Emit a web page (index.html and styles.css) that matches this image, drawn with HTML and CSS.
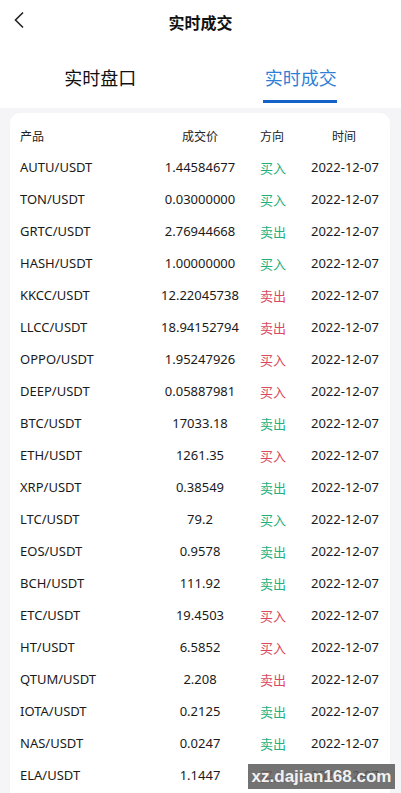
FILE: index.html
```html
<!DOCTYPE html>
<html lang="zh-CN">
<head>
    <meta charset="UTF-8">
    <meta name="viewport" content="width=device-width, initial-scale=1.0">
    <title>实时成交</title>
    <link rel="stylesheet" href="styles.css">
</head>
<body>

    <!-- 顶部导航 -->
    <header class="topbar">
        <a class="back" href="#">
            <svg width="12" height="18" viewBox="0 0 12 18"><path d="M10 1.5 L2.5 9 L10 16.5" fill="none" stroke="#222" stroke-width="1.6"/></svg>
        </a>
        <h1>实时成交</h1>
    </header>

    <!-- 标签 -->
    <nav class="tabs">
        <div class="tab">实时盘口</div>
        <div class="tab active">实时成交</div>
    </nav>

    <main class="page">
        <div class="card">
            <div class="row head">
                <span class="c-name">产品</span>
                <span class="c-price">成交价</span>
                <span class="c-dir">方向</span>
                <span class="c-time">时间</span>
            </div>
            <div id="list"></div>
        </div>
    </main>

    <div class="watermark">xz.dajian168.com</div>

    <script>
        var datos = [
            ["AUTU/USDT", "1.44584677", "买入", "up"],
            ["TON/USDT", "0.03000000", "买入", "up"],
            ["GRTC/USDT", "2.76944668", "卖出", "up"],
            ["HASH/USDT", "1.00000000", "买入", "up"],
            ["KKCC/USDT", "12.22045738", "卖出", "down"],
            ["LLCC/USDT", "18.94152794", "卖出", "down"],
            ["OPPO/USDT", "1.95247926", "买入", "down"],
            ["DEEP/USDT", "0.05887981", "买入", "down"],
            ["BTC/USDT", "17033.18", "卖出", "up"],
            ["ETH/USDT", "1261.35", "买入", "down"],
            ["XRP/USDT", "0.38549", "卖出", "up"],
            ["LTC/USDT", "79.2", "买入", "up"],
            ["EOS/USDT", "0.9578", "卖出", "up"],
            ["BCH/USDT", "111.92", "卖出", "up"],
            ["ETC/USDT", "19.4503", "买入", "down"],
            ["HT/USDT", "6.5852", "买入", "down"],
            ["QTUM/USDT", "2.208", "卖出", "down"],
            ["IOTA/USDT", "0.2125", "卖出", "up"],
            ["NAS/USDT", "0.0247", "卖出", "up"],
            ["ELA/USDT", "1.1447", "买入", "down"]
        ];

        var list = document.getElementById("list");
        datos.forEach(function (d) {
            var row = document.createElement("div");
            row.className = "row";
            row.innerHTML =
                '<span class="c-name">' + d[0] + '</span>' +
                '<span class="c-price">' + d[1] + '</span>' +
                '<span class="c-dir ' + d[3] + '">' + d[2] + '</span>' +
                '<span class="c-time">2022-12-07</span>';
            list.appendChild(row);
        });
    </script>

</body>
</html>
```

FILE: styles.css
```css
/* 基础 */
body {
    margin: 0;
    padding: 0;
    font-family: "Noto Sans", "Noto Sans CJK SC", sans-serif;
    color: #222;
    background-color: #f5f5f8;
    height: 793px;
    overflow: hidden;
}

/* 顶部导航 */
.topbar {
    position: relative;
    height: 44px;
    display: flex;
    align-items: center;
    justify-content: center;
    background-color: #fff;
}

.topbar h1 {
    margin: 0;
    font-size: 16px;
    font-weight: bold;
    color: #111;
}

.back {
    position: absolute;
    left: 13px;
    top: 11px;
    display: flex;
}

/* 标签 */
.tabs {
    display: flex;
    height: 64px;
    background-color: #fff;
}

.tab {
    flex: 1;
    display: flex;
    align-items: center;
    justify-content: center;
    padding-top: 2px;
    font-size: 18px;
    color: #111;
    box-sizing: border-box;
    position: relative;
}

.tab.active {
    color: #2f7fd8;
}

.tab.active::after {
    content: "";
    position: absolute;
    left: 62px;
    width: 74px;
    bottom: 5px;
    height: 3px;
    background-color: #1662c8;
}

/* 列表 */
.page {
    padding: 5px 11px 0 10px;
}

.card {
    background-color: #fff;
    border-radius: 10px;
    padding: 8px 0 0;
    height: 700px;
}

.row {
    display: flex;
    align-items: center;
    height: 32px;
    font-size: 13px;
    color: #1a1a1a;
}

.row.head {
    height: 30px;
    font-size: 12px;
    color: #222;
}

.row span {
    flex: none;
    white-space: nowrap;
}

.c-name {
    width: 120px;
    padding-left: 10px;
}

.c-price {
    width: 120px;
    text-align: center;
}

.c-dir {
    width: 24px;
    text-align: center;
}

.c-time {
    width: 66px;
    margin-left: 27px;
    text-align: center;
}

.up {
    color: #22b07c;
}

.down {
    color: #d9485f;
}

/* 水印 */
.watermark {
    position: absolute;
    left: 248px;
    top: 764px;
    width: 147px;
    height: 25px;
    line-height: 25px;
    text-align: center;
    background-color: rgba(90, 90, 90, 0.85);
    color: rgba(255, 255, 255, 0.92);
    font-family: "Liberation Sans", Arial, sans-serif;
    font-size: 17px;
    font-weight: bold;
}
```
